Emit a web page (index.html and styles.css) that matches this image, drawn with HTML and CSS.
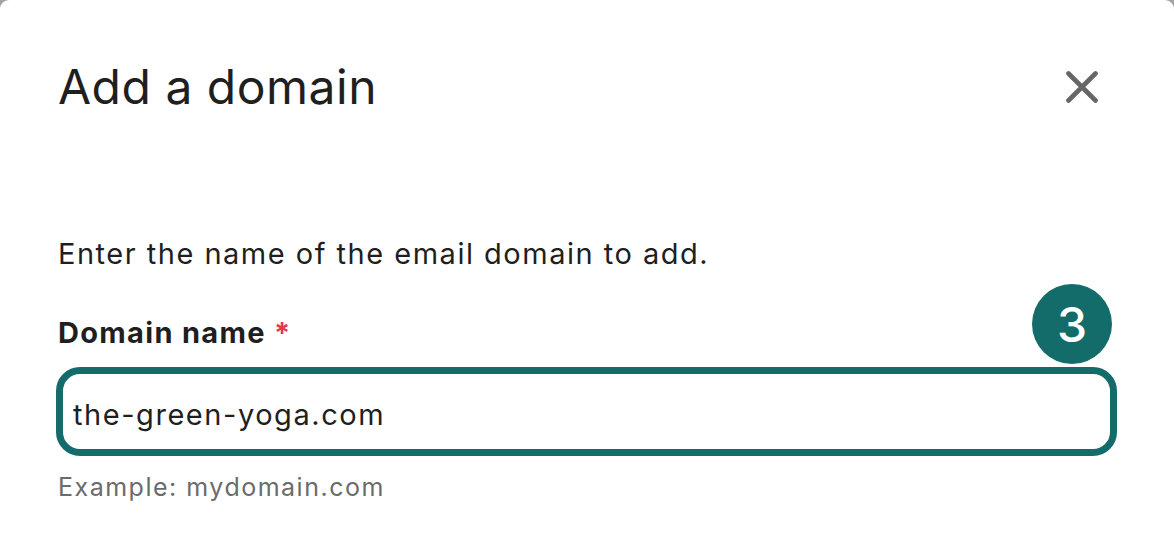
FILE: index.html
```html
<!DOCTYPE html>
<html lang="en">
<head>
<meta charset="utf-8">
<title>Add a domain</title>
<link rel="stylesheet" href="styles.css">
</head>
<body>
<div class="modal">
  <div class="modal-header">
    <h1 class="modal-title">Add a domain</h1>
    <button class="close-btn" aria-label="Close">
      <svg width="32" height="32" viewBox="0 0 32 32" aria-hidden="true">
        <path d="M2.5 2.5 L29.5 29.5 M29.5 2.5 L2.5 29.5" stroke="#666666" stroke-width="4.6" stroke-linecap="round" fill="none"/>
      </svg>
    </button>
  </div>
  <p class="intro">Enter the name of the email domain to add.</p>
  <label class="field-label" for="domain">Domain name <span class="req">*</span></label>
  <div class="field">
    <input id="domain" class="text-input" type="text" value="the-green-yoga.com" readonly>
    <span class="step-badge">3</span>
  </div>
  <p class="hint">Example: mydomain.com</p>
</div>
</body>
</html>
```

FILE: styles.css
```css
html, body {
  margin: 0;
  padding: 0;
  height: 100%;
}
body {
  background: #a3a3a3;
  font-family: Inter, "Noto Sans", "Liberation Sans", sans-serif;
  color: #1f1f1f;
}
.modal {
  box-sizing: border-box;
  height: 100%;
  background: #ffffff;
  border-radius: 9px 9px 0 0;
  padding: 58px 57px 0 56px;
  display: flex;
  flex-direction: column;
}
.modal-header {
  display: flex;
  align-items: center;
  justify-content: space-between;
  padding-left: 2px;
}
.modal-title {
  margin: 0;
  font-size: 48px;
  line-height: 58px;
  font-weight: 400;
  color: #1f1f1f;
  letter-spacing: 0.5px;
}
.close-btn {
  border: 0;
  background: none;
  padding: 0;
  margin-right: 19px;
  width: 32px;
  height: 32px;
  display: flex;
  align-items: center;
  justify-content: center;
  cursor: pointer;
}
.intro {
  margin: 120px 0 0 2px;
  font-size: 29px;
  line-height: 35px;
  letter-spacing: 1.5px;
  color: #1f1f1f;
}
.field-label {
  display: block;
  margin: 44px 0 0 2px;
  font-size: 29px;
  line-height: 35px;
  font-weight: 700;
  letter-spacing: 1.3px;
  color: #1f1f1f;
}
.req {
  color: #e8364f;
}
.field {
  position: relative;
  margin-top: 17px;
}
.text-input {
  display: block;
  box-sizing: border-box;
  width: 100%;
  height: 89px;
  border: 7px solid #146c6a;
  border-radius: 24px;
  padding: 5px 0 0 10px;
  font-family: inherit;
  font-size: 29px;
  letter-spacing: 1.55px;
  color: #1f1f1f;
  background: #ffffff;
  outline: none;
}
.step-badge {
  position: absolute;
  right: 5px;
  top: -83px;
  width: 80px;
  height: 80px;
  border-radius: 50%;
  background: #146c6a;
  color: #ffffff;
  font-size: 48px;
  font-weight: 500;
  display: flex;
  align-items: center;
  justify-content: center;
}
.hint {
  margin: 16px 0 0 2px;
  font-size: 25px;
  line-height: 30px;
  letter-spacing: 1.5px;
  color: #6b6b6b;
}
```
